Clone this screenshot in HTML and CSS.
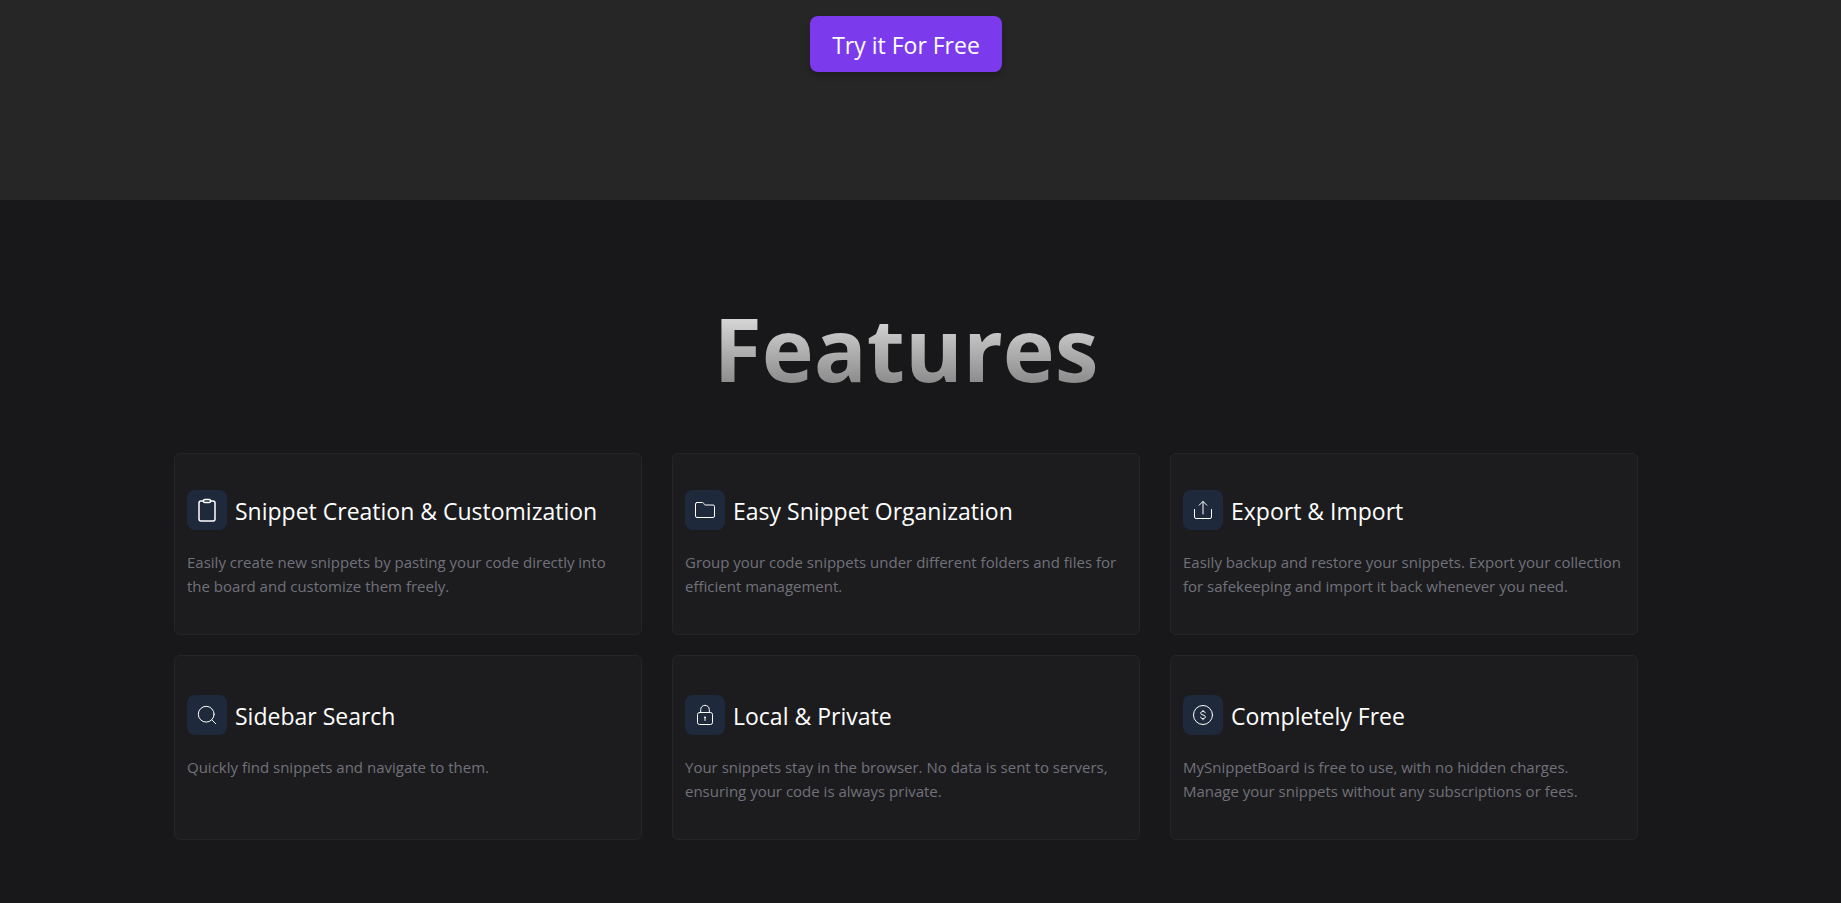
FILE: index.html
```html
<!DOCTYPE html>
<html lang="en">
<head>
<meta charset="utf-8">
<meta name="viewport" content="width=device-width, initial-scale=1">
<title>MySnippetBoard</title>
<link rel="stylesheet" href="styles.css">
</head>
<body>
<section class="hero">
  <button class="cta" type="button">Try it For Free</button>
</section>
<main class="features">
  <h2 class="features-title">Features</h2>
  <div class="grid">
    <article class="card">
      <div class="card-head">
        <span class="tile"><svg class="icon" viewBox="0 0 24 24" aria-hidden="true"><g stroke-width="1.5"><rect x="4" y="3" width="16" height="20" rx="2"/><rect x="8.4" y="1.6" width="7.2" height="3" rx="1.5" class="tile-fill"/></g></svg></span>
        <h3 class="card-title">Snippet Creation &amp; Customization</h3>
      </div>
      <p class="card-text">Easily create new snippets by pasting your code directly into the board and customize them freely.</p>
    </article>
    <article class="card">
      <div class="card-head">
        <span class="tile"><svg class="icon" viewBox="0 0 24 24" aria-hidden="true"><path d="M4 4.5h5.4c.8 0 1.200.6 1.500 1.200l.3.600c.2.400.5.700 1 .7H20a1.500 1.500 0 0 1 1.500 1.500V18a1.500 1.500 0 0 1-1.500 1.500H4A1.500 1.500 0 0 1 2.500 18V6A1.500 1.500 0 0 1 4 4.500z"/></svg></span>
        <h3 class="card-title">Easy Snippet Organization</h3>
      </div>
      <p class="card-text">Group your code snippets under different folders and files for efficient management.</p>
    </article>
    <article class="card">
      <div class="card-head">
        <span class="tile"><svg class="icon" viewBox="0 0 24 24" aria-hidden="true"><path d="M3.500 11.500v7.500a1.500 1.500 0 0 0 1.500 1.500h14a1.500 1.500 0 0 0 1.500-1.500v-7.500M12 16V3.500M8.200 7.200 12 3.400l3.800 3.800"/></svg></span>
        <h3 class="card-title">Export &amp; Import</h3>
      </div>
      <p class="card-text">Easily backup and restore your snippets. Export your collection for safekeeping and import it back whenever you need.</p>
    </article>
    <article class="card card-tall">
      <div class="card-head">
        <span class="tile"><svg class="icon" viewBox="0 0 24 24" aria-hidden="true"><circle cx="11.200" cy="11.200" r="7.900"/><path d="m16.800 16.800 4 4"/></svg></span>
        <h3 class="card-title">Sidebar Search</h3>
      </div>
      <p class="card-text">Quickly find snippets and navigate to them.</p>
    </article>
    <article class="card card-tall">
      <div class="card-head">
        <span class="tile"><svg class="icon" viewBox="0 0 24 24" aria-hidden="true"><rect x="4.500" y="9.500" width="15" height="12" rx="2"/><path d="M7.700 9.500V6.600a4.300 4.300 0 0 1 8.600 0v2.900M12 14v3.500"/><circle cx="12" cy="14.400" r=".5"/></svg></span>
        <h3 class="card-title">Local &amp; Private</h3>
      </div>
      <p class="card-text">Your snippets stay in the browser. No data is sent to servers, ensuring your code is always private.</p>
    </article>
    <article class="card card-tall">
      <div class="card-head">
        <span class="tile"><svg class="icon" viewBox="0 0 24 24" aria-hidden="true"><circle cx="12" cy="12" r="9.500"/><path d="M14.300 9.800c-.3-.9-1.200-1.300-2.300-1.300-1.300 0-2.300.6-2.300 1.700 0 2.400 4.700 1.200 4.700 3.700 0 1.100-1.100 1.700-2.400 1.700-1.200 0-2.200-.5-2.400-1.500M12 7.300v1.200M12 15.600v1.200"/></svg></span>
        <h3 class="card-title">Completely Free</h3>
      </div>
      <p class="card-text">MySnippetBoard is free to use, with no hidden charges. Manage your snippets without any subscriptions or fees.</p>
    </article>
  </div>
</main>
</body>
</html>
```
FILE: styles.css
```css
* {
  box-sizing: border-box;
}

body {
  margin: 0;
  min-height: 100vh;
  background: #18181a;
  color: #fff;
  font-family: "Segoe UI", "Open Sans", "Noto Sans", sans-serif;
}

.hero {
  display: flex;
  justify-content: center;
  padding: 16px 29px 128px 0;
  background: #262626;
}

.cta {
  height: 56px;
  padding: 2px 22px 0;
  border: 0;
  border-radius: 8px;
  background: #7c3aed;
  box-shadow: 0 4px 6px rgba(0, 0, 0, 0.2);
  color: #fff;
  font: inherit;
  font-size: 23px;
  cursor: pointer;
}

.features {
  padding: 96px 29px 48px 0;
}

.features-title {
  margin: 0 0 53px;
  background: linear-gradient(#f0f0f0, #787878);
  -webkit-background-clip: text;
  background-clip: text;
  color: transparent;
  font-size: 88px;
  font-weight: 700;
  line-height: 104px;
  text-align: center;
}

.grid {
  display: grid;
  grid-template-columns: repeat(3, 1fr);
  gap: 20px 30px;
  max-width: 1464px;
  margin: 0 auto;
}

.card {
  padding: 36px 12px;
  border: 1px solid #252527;
  border-radius: 6px;
  background: #1c1c1e;
}

.card-tall {
  padding-top: 39px;
}

.card-head {
  display: flex;
  align-items: center;
  gap: 8px;
  margin-bottom: 20px;
}

.tile {
  display: grid;
  flex: none;
  place-items: center;
  width: 40px;
  height: 40px;
  border-radius: 8px;
  background: #1e293b;
}

.icon {
  width: 24px;
  height: 24px;
  fill: none;
  stroke: #fff;
  stroke-linecap: round;
  stroke-linejoin: round;
}

.tile-fill {
  fill: #1e293b;
}

.card-title {
  margin: 0;
  padding-top: 2px;
  font-size: 23px;
  font-weight: 400;
  line-height: 32px;
}

.card-text {
  margin: 0;
  color: #71717a;
  font-size: 15px;
  line-height: 24px;
}
```
